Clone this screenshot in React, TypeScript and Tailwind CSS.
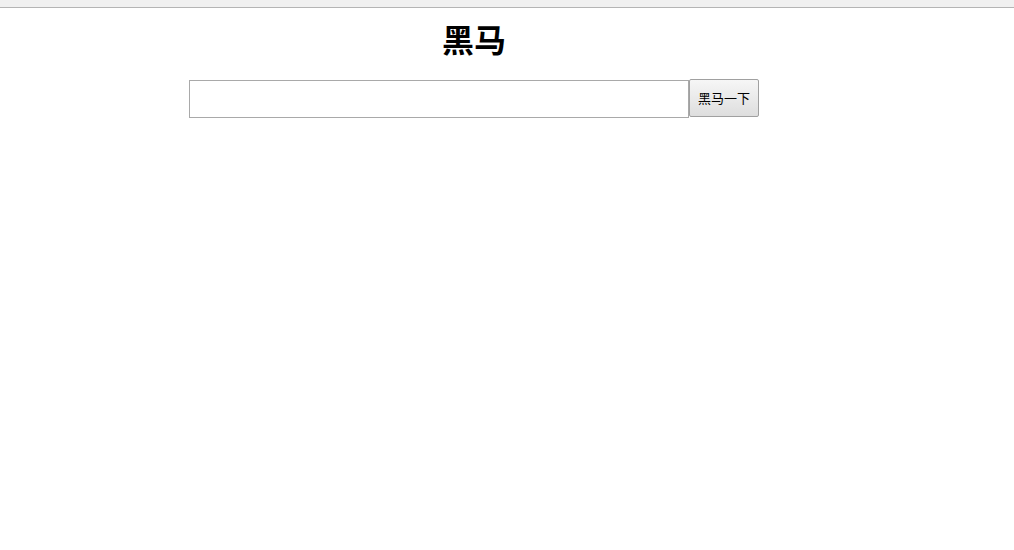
const App = () => {
  return (
    <div className="min-h-screen bg-white font-['Noto_Sans_CJK_SC',sans-serif] text-black">
      {/* browser strip at the top */}
      <div className="h-[8px] bg-[#f0f0f0] border-b border-[#b4b4b4]" />

      <div className="w-[948px]">
        <h1 className="mt-[10px] text-center text-[32px] leading-[40px] font-bold">黑马</h1>

        <form className="mt-[21px] flex justify-center items-start">
          <input
            type="text"
            className="mt-px w-[500px] h-[38px] border border-[#a9a9a9] bg-white outline-none"
          />
          <button
            type="button"
            className="w-[70px] h-[38px] border border-[#a0a0a0] rounded-[2px] bg-gradient-to-b from-[#f6f6f6] to-[#dedede] text-[13px] text-black"
          >
            黑马一下
          </button>
        </form>
      </div>
    </div>
  );
};

export default App;
